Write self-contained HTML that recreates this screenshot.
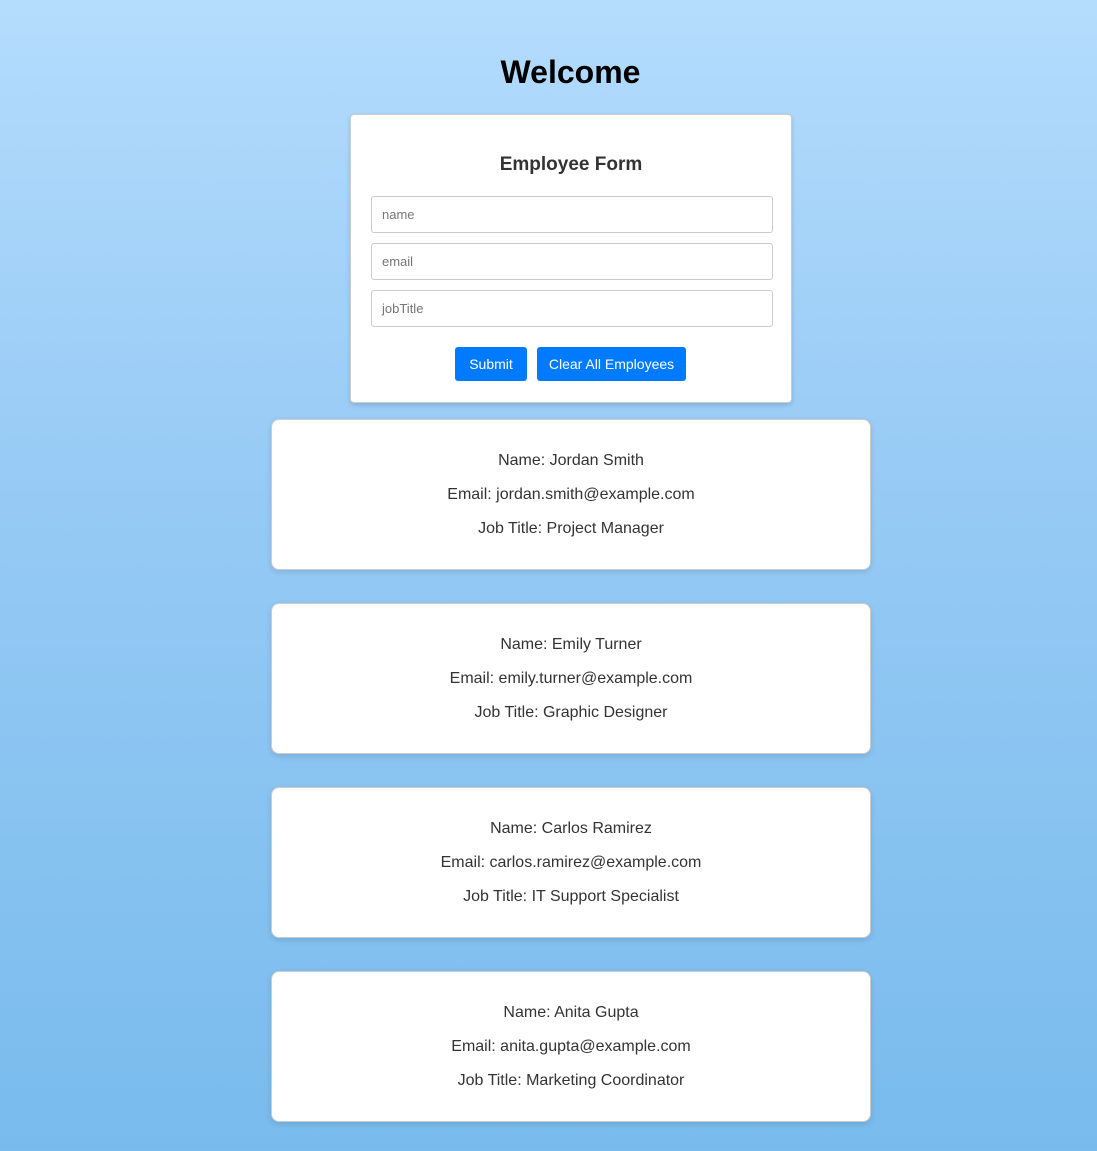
<!DOCTYPE html>
<html><head><style>
*{box-sizing:border-box;margin:0;padding:0}
body{width:1097px;height:1151px;overflow:hidden;background:linear-gradient(to bottom,#b4dcfd 0%,#98cbf5 40%,#78bbed 100%);font-family:"Liberation Sans",sans-serif;position:relative}
h1{position:absolute;left:0;width:1141px;top:54px;text-align:center;font-size:32px;font-weight:bold;color:#000}
.form{position:absolute;left:350px;top:114px;width:442px;height:289px;background:#fff;border:1px solid #ccc;border-radius:4px;box-shadow:0 2px 5px rgba(0,0,0,.15)}
.form h2{position:absolute;top:39px;left:0;width:100%;text-align:center;font-size:19px;color:#333}
.inp{position:absolute;left:20px;width:402px;height:37px;border:1px solid #ccc;border-radius:3px;font-size:13px;color:#757575;padding:10px 10px;line-height:16px}
.btn{position:absolute;top:232px;height:34px;background:#007bff;color:#fff;font-size:14px;border-radius:3px;text-align:center;line-height:34px}
.card{position:absolute;left:271px;width:600px;height:151px;background:#fff;border:1px solid #ccc;border-radius:8px;box-shadow:0 2px 6px rgba(0,0,0,.12);text-align:center;font-size:16px;color:#333}
.card p{position:absolute;left:0;width:100%;line-height:20px}
</style></head><body>
<h1>Welcome</h1>
<div class="form">
<h2>Employee Form</h2>
<div class="inp" style="top:81px">name</div>
<div class="inp" style="top:128px">email</div>
<div class="inp" style="top:175px">jobTitle</div>
<div class="btn" style="left:104px;width:72px">Submit</div>
<div class="btn" style="left:186px;width:149px">Clear All Employees</div>
</div>
<div class="card" style="top:419px"><p style="top:31px">Name: Jordan Smith</p><p style="top:65px">Email: jordan.smith@example.com</p><p style="top:99px">Job Title: Project Manager</p></div>
<div class="card" style="top:603px"><p style="top:31px">Name: Emily Turner</p><p style="top:65px">Email: emily.turner@example.com</p><p style="top:99px">Job Title: Graphic Designer</p></div>
<div class="card" style="top:787px"><p style="top:31px">Name: Carlos Ramirez</p><p style="top:65px">Email: carlos.ramirez@example.com</p><p style="top:99px">Job Title: IT Support Specialist</p></div>
<div class="card" style="top:971px"><p style="top:31px">Name: Anita Gupta</p><p style="top:65px">Email: anita.gupta@example.com</p><p style="top:99px">Job Title: Marketing Coordinator</p></div>
</body></html>
